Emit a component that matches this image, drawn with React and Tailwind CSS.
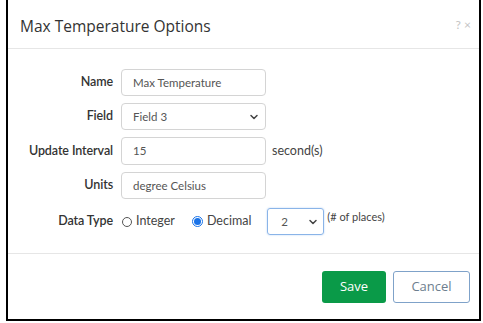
import { ChevronDown } from 'lucide-react'

const LABEL = 'w-[113px] shrink-0 pr-[8px] text-right text-[12.5px] font-semibold text-[#333] tracking-[-0.1px]'
const INPUT = 'h-[27px] w-[145px] rounded-[4px] border border-[#d4d4d4] bg-white px-[11px] text-[11.5px] text-[#555] flex items-center'

function Row({ label, children, className = '' }) {
  return (
    <div className={`flex items-center ${className}`}>
      <div className={LABEL}>{label}</div>
      {children}
    </div>
  )
}

export default function App() {
  return (
    <div className="h-[323px] w-[483px] bg-white font-['Lato',sans-serif]">
      <div className="ml-[6px] h-[321px] w-[475px] border-x-2 border-b-2 border-black bg-white flex flex-col">
        {/* header */}
        <div className="flex h-[49px] items-center justify-between border-b border-[#e6e6e6] pl-[12px] pr-[8px]">
          <div className="font-['Open_Sans',sans-serif] text-[15.5px] text-[#333] pt-[5px]">Max Temperature Options</div>
          <div className="text-[12px] text-[#c4c4c4] pt-[2px]">? ×</div>
        </div>

        {/* body */}
        <div className="flex flex-1 flex-col gap-[7px] pt-[20px]">
          <Row label="Name">
            <div className={INPUT}>Max Temperature</div>
          </Row>
          <Row label="Field">
            <div className={`${INPUT} justify-between pr-[5px]`}>
              <span>Field 3</span>
              <ChevronDown size={12} strokeWidth={3} className="text-[#444]" />
            </div>
          </Row>
          <Row label="Update Interval">
            <div className={`${INPUT} h-[28px]`}>15</div>
            <span className="ml-[6px] text-[12.5px] text-[#444]">second(s)</span>
          </Row>
          <Row label="Units">
            <div className={INPUT}>degree Celsius</div>
          </Row>
          <Row label="Data Type" className="mt-[2px]">
            <div className="flex items-center text-[12.5px] text-[#444]">
              <span className="ml-[1px] h-[10px] w-[10px] rounded-full border border-[#555]" />
              <span className="ml-[4px]">Integer</span>
              <span className="ml-[17px] flex h-[11px] w-[11px] items-center justify-center rounded-full border border-[#1a73e8]">
                <span className="h-[7px] w-[7px] rounded-full bg-[#1a73e8]" />
              </span>
              <span className="ml-[4px]">Decimal</span>
              <div className="ml-[16px] flex h-[27px] w-[57px] items-center justify-between rounded-[3px] border border-[#8ab4e8] pl-[13px] pr-[4px] text-[11.5px] text-[#555] shadow-[0_0_2px_#b5d0f2]">
                <span>2</span>
                <ChevronDown size={12} strokeWidth={3} className="text-[#444]" />
              </div>
              <span className="ml-[3px] -mt-[8px] text-[11px]">(# of places)</span>
            </div>
          </Row>
        </div>

        {/* footer */}
        <div className="flex h-[66px] items-center justify-end gap-[7px] border-t border-[#e6e6e6] pr-[9px]">
          <button className="h-[32px] w-[64px] rounded-[3px] bg-[#0a9a48] text-[13px] text-white font-['Open_Sans',sans-serif]">Save</button>
          <button className="h-[32px] w-[77px] rounded-[3px] border border-[#7fa2c9] text-[13px] text-[#6d7e8e] font-['Open_Sans',sans-serif]">Cancel</button>
        </div>
      </div>
    </div>
  )
}
